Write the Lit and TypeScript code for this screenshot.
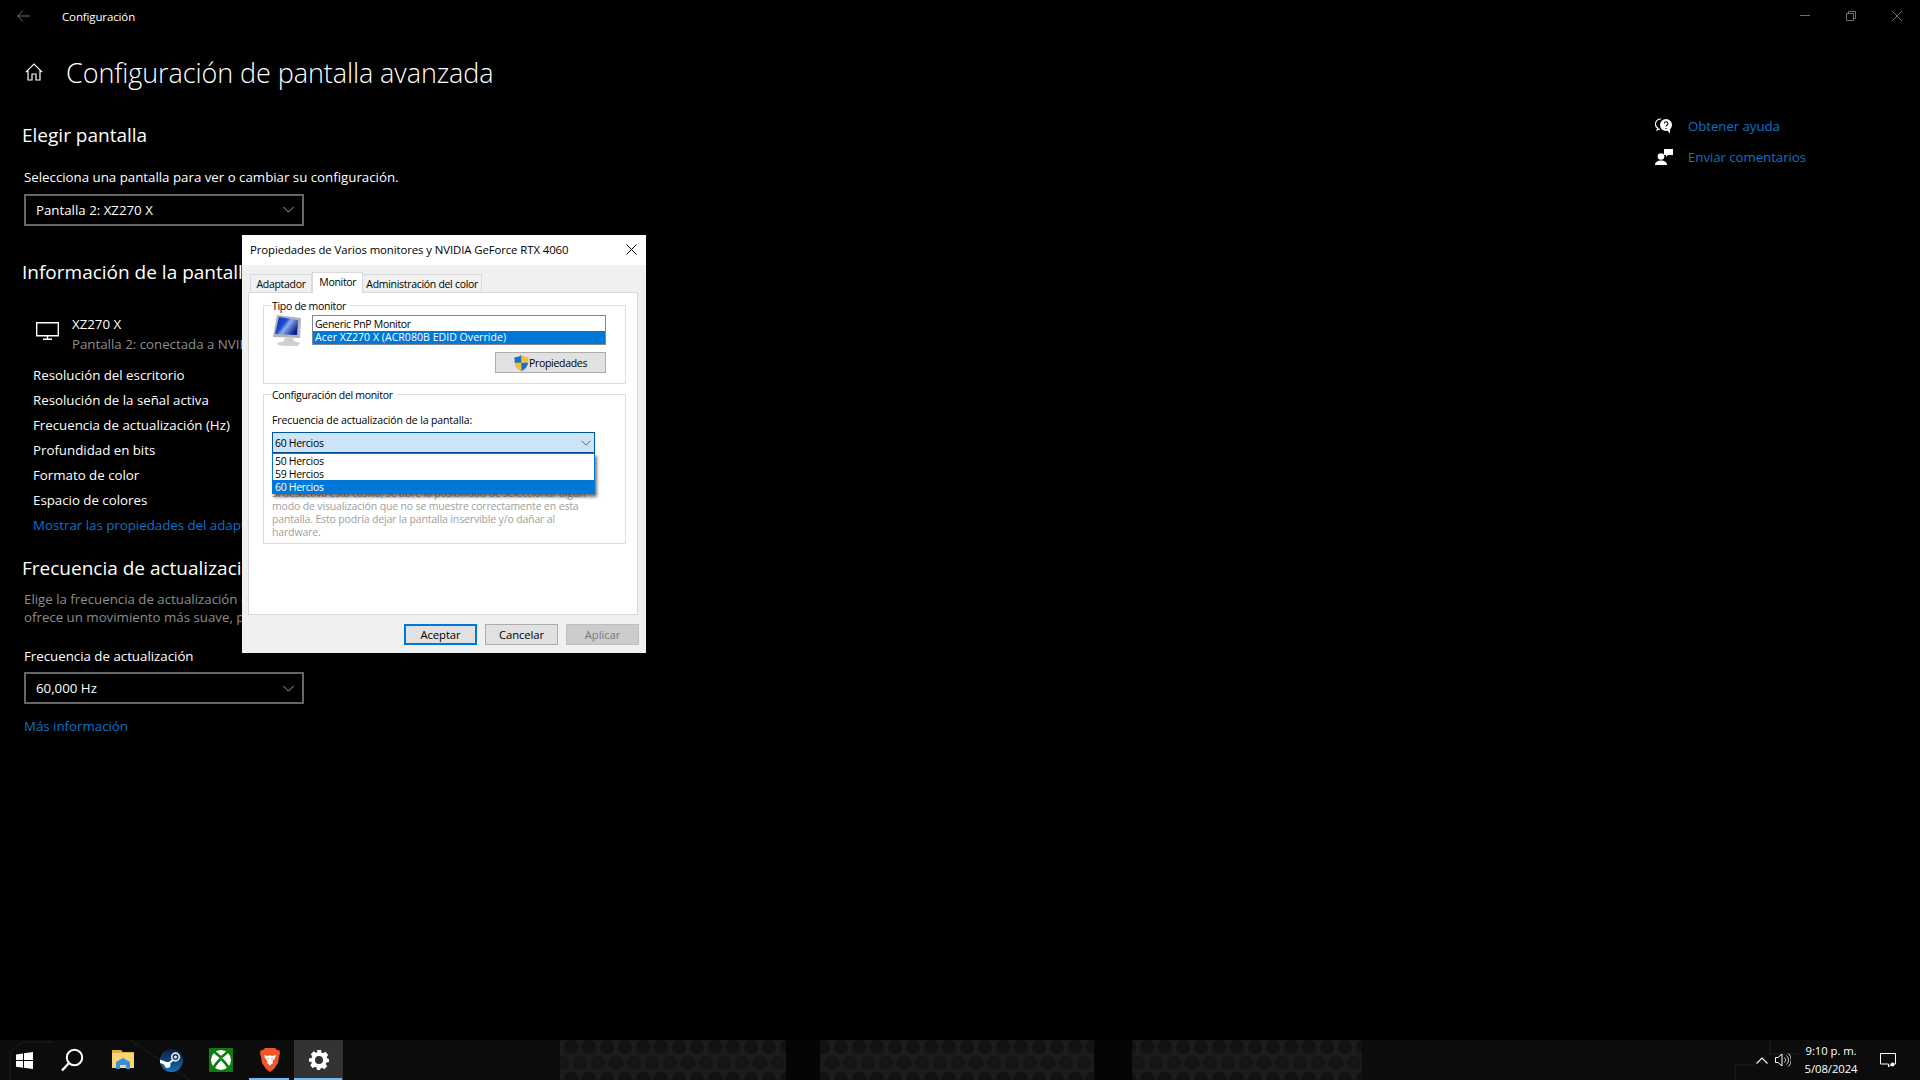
import { LitElement, css, html, svg } from 'lit';
import { customElement } from 'lit/decorators.js';

const chevron = html`<svg class="chev" viewBox="0 0 14 8"><path d="M1 1l6 6 6-6" fill="none" stroke="currentColor" stroke-width="1"/></svg>`;

const infoRows = [
    'Resolución del escritorio',
    'Resolución de la señal activa',
    'Frecuencia de actualización (Hz)',
    'Profundidad en bits',
    'Formato de color',
    'Espacio de colores',
];

const hzOptions = ['50 Hercios', '59 Hercios', '60 Hercios'];

const warningLines = [
    'Si desactiva esta casilla, se abre la posibilidad de seleccionar algún',
    'modo de visualización que no se muestre correctamente en esta',
    'pantalla. Esto podría dejar la pantalla inservible y/o dañar al',
    'hardware.',
];

// Mesh bands of the wallpaper that shows through the taskbar
const meshBands = [
    { x: 560, w: 226 },
    { x: 820, w: 274 },
    { x: 1132, w: 230 },
];

const taskIcons = [
    html`<svg width="17" height="17" viewBox="0 0 17 17"><path fill="#fff" d="M0 2.400l7-1v6.700H0zM8 1.300L17 0v8.100H8zM0 9h7v6.700l-7-1zM8 9h9v8l-9-1.300z"/></svg>`,
    html`<svg class="search" width="24" height="24" viewBox="0 0 24 24"><circle cx="14.500" cy="9.500" r="7.700" fill="none" stroke="#fff" stroke-width="2"/><path d="M9 15L2 22.500" stroke="#fff" stroke-width="2.400"/></svg>`,
    html`<svg width="22" height="20" viewBox="0 0 22 20"><path fill="#e0b040" d="M0 0h9l2 2h11v3H0z"/><path fill="#f7d675" d="M0 3h22v15H0z"/><path fill="#3b8fd8" d="M4 12l7-4 7 4v7h-4v-4H8v4H4z"/></svg>`,
    html`<svg width="23" height="23" viewBox="0 0 23 23"><defs><linearGradient id="steam" x1="0" y1="0" x2="0" y2="1"><stop offset="0" stop-color="#0f1f3f"/><stop offset="0.55" stop-color="#12487f"/><stop offset="1" stop-color="#1a6fae"/></linearGradient></defs><circle cx="11.500" cy="11.500" r="11.500" fill="url(#steam)"/><path fill="#fff" d="M0 10.500l9 3.500-1.500 3L0 14z"/><circle cx="7.500" cy="16" r="3" fill="#fff"/><path d="M8 15l5-4" stroke="#fff" stroke-width="2"/><circle cx="15.500" cy="8" r="3.800" fill="none" stroke="#e4e9ef" stroke-width="1.700"/><circle cx="15.500" cy="8" r="1.500" fill="#e4e9ef"/></svg>`,
    html`<svg width="24" height="24" viewBox="0 0 24 24"><rect width="24" height="24" rx="1" fill="#107c10"/><circle cx="12" cy="12" r="10" fill="#fff"/><path d="M12 9.500L5.200 3.800M12 9.500l6.800-5.700M12 10.500C8 14.500 5 18 4.300 20.800M12 10.500c4 4 7 7.500 7.700 10.300" fill="none" stroke="#107c10" stroke-width="2.600"/></svg>`,
    html`<svg width="20" height="24" viewBox="0 0 20 24"><path fill="#f1562b" d="M5 0h10l2 2 2.500.5L20 5l-1 4-1 6-4 6-4 3-4-3-4-6-1-6-1-4 .5-2.500L3 2z"/><path fill="#fff" d="M4 7l4 1 2-.7 2 .7 4-1-1 3-2.500 3 .5 2-3 2.500L7 15l.5-2L5 10z"/><path fill="#f1562b" d="M7 10l2 .5-1 1zM13 10l-2 .5 1 1z"/></svg>`,
    html`<svg width="20" height="20" viewBox="0 0 20 20"><path fill="#fff" fill-rule="evenodd" d="M8 0h4l.5 2.600 1.600.7 2.200-1.500 2.900 2.900-1.500 2.200.7 1.600L20 9v3l-2.600.5-.7 1.600 1.500 2.200-2.900 2.900-2.200-1.500-1.600.7L11 20H8l-.5-2.600-1.600-.7-2.200 1.500-2.400-2.900 1.500-2.200-.7-1.600L0 12V8.500l2.600-.5.7-1.600-1.500-2.200 2.900-2.900 2.200 1.500 1.600-.7zM10 6a4 4 0 1 0 0 8 4 4 0 0 0 0-8z"/></svg>`,
];

@customElement('app-root')
export class AppRoot extends LitElement {
    static styles = css`
        :host {
            display: flex;
            flex-direction: column;
            height: 1080px;
            background: #000;
            color: #fff;
            font-family: 'Open Sans', 'Noto Sans', sans-serif;
            overflow: hidden;
            position: relative;
        }

        /* SETTINGS WINDOW */
        .window { flex: 1; display: flex; flex-direction: column; }

        .titlebar {
            height: 32px;
            display: flex;
            align-items: center;
            font-size: 11.500px;
            letter-spacing: -0.130px;
            color: #fff;
        }
        .back { margin-left: 17px; width: 45px; color: #6e6e6e; display: flex; }
        .controls { margin-left: auto; display: flex; gap: 36px; padding-right: 18px; color: #707070; }
        .controls svg { display: block; }

        .content { flex: 1; display: flex; }
        .main { width: 1650px; padding-left: 24px; box-sizing: border-box; }

        .page-title { display: flex; align-items: center; height: 40px; margin: 20px 0 0 1px; }
        .page-title svg { margin-right: 23px; }
        .page-title h1 { font-size: 27px; font-weight: 300; margin: 0; letter-spacing: -0.085px; white-space: nowrap; }

        h2 { font-size: 19px; font-weight: 400; margin: 0 0 0 -2px; line-height: 28px; white-space: nowrap; }
        .t14 { font-size: 13.300px; line-height: 18px; letter-spacing: -0.010px; white-space: nowrap; }
        .muted { color: #8c8c8c; }
        .link { color: #0a72c8; }

        .choose { margin-top: 28.500px; }
        .choose .intro { margin-top: 19px; }

        .select {
            width: 280px;
            height: 32px;
            box-sizing: border-box;
            border: 2px solid #666;
            margin-top: 8px;
            padding: 0 10px;
            display: flex;
            align-items: center;
            justify-content: space-between;
        }
        .chev { width: 13px; height: 7px; color: #bbb; margin-right: -3px; }

        .info { margin-top: 32.500px; }
        .monitor { display: flex; margin: 28px 0 0 12px; }
        .monitor svg { margin: 8px 13px 0 0; }
        .monitor .t14 { line-height: 20px; }
        .rows { margin: 9px 0 0 9px; display: flex; flex-direction: column; }
        .rows .t14 { line-height: 25px; }

        .rate { margin-top: 16px; }
        .rate .desc { margin-top: 8px; }
        .rate .label { margin-top: 21px; }
        .rate .select { margin-top: 7px; }
        .rate .more { margin-top: 13px; }

        .aside { padding: 84.500px 0 0 5px; display: flex; flex-direction: column; gap: 13px; font-size: 13.300px; letter-spacing: -0.080px; white-space: nowrap; }
        .aside div { display: flex; align-items: center; height: 18px; gap: 15px; color: #0a72c8; }

        /* DIALOG */
        .dialog {
            position: absolute;
            left: 242px;
            top: 235px;
            width: 404px;
            height: 418px;
            background: #f0f0f0;
            color: #000;
            font-size: 10.500px;
            letter-spacing: -0.300px;
            box-sizing: border-box;
            display: flex;
            flex-direction: column;
            white-space: nowrap;
        }
        .dlg-title {
            height: 30px;
            background: #fff;
            display: flex;
            align-items: center;
            justify-content: space-between;
            padding: 0 9px 2px 8px;
            box-sizing: border-box;
            flex: none;
            font-size: 11.400px;
            letter-spacing: -0.100px;
        }
        .tabs { display: flex; align-items: flex-end; height: 27px; padding-left: 8px; flex: none; }
        .tab {
            height: 18px;
            box-sizing: border-box;
            background: #f0f0f0;
            border: 1px solid #d9d9d9;
            border-bottom: none;
            border-left: none;
            padding: 0 3px;
            display: flex;
            align-items: center;
        }
        .tab:first-child { border-left: 1px solid #d9d9d9; padding: 0 5.500px; }
        .tab.active {
            height: 21px;
            background: #fff;
            padding: 0 6px 3px;
            margin-bottom: -1px;
            border-left: 1px solid #d9d9d9;
            position: relative;
        }
        .panel {
            margin: 0 8px 0 6px;
            height: 323px;
            background: #fff;
            border: 1px solid #d9d9d9;
            box-sizing: border-box;
            padding: 12px 11px 0 14px;
        }
        .group {
            border: 1px solid #dcdcdc;
            position: relative;
            box-sizing: border-box;
        }
        .legend {
            position: absolute;
            top: -7px;
            left: 7px;
            background: #fff;
            padding: 0 4px 0 1px;
            line-height: 15px;
        }
        .g1 { height: 79px; padding: 9px 19px 0 9px; }
        .g2 { height: 150px; margin-top: 10px; padding: 18px 9px 0 8px; }

        .monitor-row { display: flex; justify-content: space-between; }
        .list {
            width: 294px;
            height: 30px;
            border: 1px solid #828790;
            box-sizing: border-box;
            padding-top: 2px;
        }
        .list div { height: 13px; line-height: 13px; padding-left: 2px; }
        .list .sel, .drop .sel { background: #0078d7; color: #fff; }
        .list .sel { letter-spacing: 0.050px; }

        .prop-row { display: flex; justify-content: flex-end; margin-top: 5px; }
        .btn {
            background: #e1e1e1;
            border: 1px solid #adadad;
            box-sizing: border-box;
            height: 21px;
            display: flex;
            align-items: center;
            justify-content: center;
        }
        .prop { width: 111px; gap: 0; }

        .rate-label { line-height: 15px; letter-spacing: -0.120px; }
        .combo {
            width: 323px;
            height: 21px;
            margin-top: 4px;
            background: #cce4f7;
            border: 1px solid #005499;
            box-sizing: border-box;
            display: flex;
            align-items: center;
            justify-content: space-between;
            padding: 0 4px 0 2px;
        }
        .combo .chev { width: 10px; height: 6px; color: #333; margin-right: -1px; }
        .warn { margin-top: 34px; color: #a0a0a0; line-height: 13px; letter-spacing: -0.150px; }

        .drop {
            position: absolute;
            left: 8px;
            top: 58px;
            width: 323px;
            height: 41px;
            background: #fff;
            border: 1px solid #0078d7;
            box-sizing: border-box;
            box-shadow: 2px 3px 3px rgba(0, 0, 0, 0.55);
        }
        .drop div { height: 13px; line-height: 15px; padding-left: 2px; }

        .footer { display: flex; gap: 8px; padding: 9px 7px 0 0; justify-content: flex-end; font-size: 11.300px; letter-spacing: -0.100px; }
        .footer .btn { width: 73px; }
        .footer .ok { border: 2px solid #0078d7; }
        .footer .off { background: #ccc; border-color: #bfbfbf; color: #7a7a7a; }

        /* TASKBAR */
        .taskbar {
            height: 40px;
            flex: none;
            background: #0c0c0c;
            display: flex;
            position: relative;
        }
        .wall { position: absolute; left: 0; top: 0; }
        .task {
            width: 49px;
            height: 40px;
            display: flex;
            align-items: center;
            justify-content: center;
            position: relative;
            box-sizing: border-box;
        }
        .task .search { margin-right: 3px; }
        .task.open::after {
            content: '';
            position: absolute;
            left: 4px;
            right: 5px;
            bottom: 0;
            height: 2px;
            background: #76b9ed;
        }
        .task.active { background: #333; }
        .task.active::after { left: 0; right: 1px; }

        .tray { margin-left: auto; display: flex; align-items: center; position: relative; }
        .tray svg { display: block; }
        .clock {
            width: 76px;
            margin: 0 11px 0 2px;
            text-align: center;
            font-size: 11.300px;
            line-height: 18px;
            letter-spacing: -0.050px;
            white-space: nowrap;
        }
        .tray .notif { margin-right: 24px; }
        .tray .chevron-up { margin-right: 7px; }
    `;

    renderWallpaper() {
        return svg`
            <svg class="wall" width="1920" height="40">
                <defs>
                    <pattern id="mesh" width="18" height="32" patternUnits="userSpaceOnUse" x="4" y="-1">
                        <rect width="18" height="32" fill="#1c1c1c"/>
                        <ellipse cx="9" cy="8" rx="7.500" ry="7.200" fill="#121212"/>
                        <ellipse cx="0" cy="24" rx="7.500" ry="7.200" fill="#151515"/>
                        <ellipse cx="18" cy="24" rx="7.500" ry="7.200" fill="#151515"/>
                    </pattern>
                </defs>
                ${meshBands.map(b => svg`<rect x=${b.x} width=${b.w} height="40" fill="url(#mesh)"/>`)}
                <rect x="786" width="34" height="40" fill="#050505"/>
                <rect x="1094" width="38" height="40" fill="#050505"/>
                <path d="M10 40V12l12-10h30M130 0l60 40M1735 40V25h20M1770 0v14h30" fill="none" stroke="#151515" stroke-width="2"/>
            </svg>
        `;
    }

    renderDialog() {
        return html`
            <div class="dialog">
                <div class="dlg-title">
                    <span>Propiedades de Varios monitores y NVIDIA GeForce RTX 4060</span>
                    <svg width="11" height="11" viewBox="0 0 11 11"><path d="M.5.5l10 10M10.500.5l-10 10" stroke="#000" stroke-width="1"/></svg>
                </div>
                <div class="tabs">
                    <div class="tab">Adaptador</div>
                    <div class="tab active">Monitor</div>
                    <div class="tab">Administración del color</div>
                </div>
                <div class="panel">
                    <div class="group g1">
                        <span class="legend">Tipo de monitor</span>
                        <div class="monitor-row">
                            <svg width="30" height="32" viewBox="0 0 30 32">
                                <defs>
                                    <linearGradient id="scr" x1="0" y1="0" x2="1" y2="0.600">
                                        <stop offset="0" stop-color="#0a2bc0"/>
                                        <stop offset="0.45" stop-color="#1f4fd0"/>
                                        <stop offset="0.6" stop-color="#8fb0f0"/>
                                        <stop offset="1" stop-color="#0a1f8c"/>
                                    </linearGradient>
                                </defs>
                                <path fill="#aeb4bf" d="M4 0l24 3-1 20-27-1z"/>
                                <path fill="url(#scr)" d="M6 2l19 3-1 15-22-1z"/>
                                <path fill="#cfcfcf" d="M12 23h8l1 3 6 2-2 3H12l-7-1-1-2 7-2z"/>
                            </svg>
                            <div class="list">
                                <div>Generic PnP Monitor</div>
                                <div class="sel">Acer XZ270 X (ACR080B EDID Override)</div>
                            </div>
                        </div>
                        <div class="prop-row">
                            <div class="btn prop">
                                <svg width="15" height="16" viewBox="0 0 15 16">
                                    <path fill="#1f6fc4" d="M7.500 0C5.500 1.500 3 2.200 .5 2.300c0 5-.3 10 7 13.700z"/>
                                    <path fill="#f6c02d" d="M7.500 0c2 1.500 4.500 2.200 7 2.300 0 2 0 3.800-.4 5.400H7.500z"/>
                                    <path fill="#f6c02d" d="M.9 7.700h6.600V16C3 13.800 1.500 10.800.9 7.700z"/>
                                    <path fill="#1f6fc4" d="M7.500 7.700h6.600C13.500 10.800 12 13.800 7.500 16z"/>
                                </svg>
                                <span>Propiedades</span>
                            </div>
                        </div>
                    </div>
                    <div class="group g2">
                        <span class="legend">Configuración del monitor</span>
                        <div class="rate-label">Frecuencia de actualización de la pantalla:</div>
                        <div class="combo"><span>60 Hercios</span>${chevron}</div>
                        <div class="warn">${warningLines.map(l => html`<div>${l}</div>`)}</div>
                        <div class="drop">
                            ${hzOptions.map(o => html`<div class=${o === '60 Hercios' ? 'sel' : ''}>${o}</div>`)}
                        </div>
                    </div>
                </div>
                <div class="footer">
                    <div class="btn ok">Aceptar</div>
                    <div class="btn">Cancelar</div>
                    <div class="btn off">Aplicar</div>
                </div>
            </div>
        `;
    }

    render() {
        return html`
            <div class="window">
                <div class="titlebar">
                    <span class="back"><svg width="13" height="12" viewBox="0 0 13 12"><path d="M6 .5L.8 6 6 11.500M1 6h12" fill="none" stroke="currentColor" stroke-width="1"/></svg></span>
                    <span>Configuración</span>
                    <div class="controls">
                        <svg width="10" height="10" viewBox="0 0 10 10"><path d="M0 4.500h10" stroke="currentColor"/></svg>
                        <svg width="10" height="10" viewBox="0 0 10 10"><path d="M.5 2.500h7v7h-7zM2.500 2.500V.5h7v7h-2" fill="none" stroke="currentColor"/></svg>
                        <svg width="10" height="10" viewBox="0 0 10 10"><path d="M0 0l10 10M10 0L0 10" stroke="currentColor"/></svg>
                    </div>
                </div>
                <div class="content">
                    <div class="main">
                        <div class="page-title">
                            <svg width="18" height="18" viewBox="0 0 18 18"><path d="M.8 9.200L9 1l8.200 8.200M3 7v10h4v-6h4v6h4V7" fill="none" stroke="#fff" stroke-width="1.200"/></svg>
                            <h1>Configuración de pantalla avanzada</h1>
                        </div>

                        <div class="choose">
                            <h2>Elegir pantalla</h2>
                            <div class="t14 intro">Selecciona una pantalla para ver o cambiar su configuración.</div>
                            <div class="select t14"><span>Pantalla 2: XZ270 X</span>${chevron}</div>
                        </div>

                        <div class="info">
                            <h2>Información de la pantalla</h2>
                            <div class="monitor">
                                <svg width="23" height="18" viewBox="0 0 23 18"><path d="M.7.7h21.600v13H.7zM11.500 14v3M7 17.200h9" fill="none" stroke="#fff" stroke-width="1.400"/></svg>
                                <div>
                                    <div class="t14">XZ270 X</div>
                                    <div class="t14 muted">Pantalla 2: conectada a NVIDIA GeForce RTX 4060</div>
                                </div>
                            </div>
                            <div class="rows">
                                ${infoRows.map(r => html`<div class="t14">${r}</div>`)}
                                <div class="t14 link">Mostrar las propiedades del adaptador de pantalla para Pantalla 2</div>
                            </div>
                        </div>

                        <div class="rate">
                            <h2>Frecuencia de actualización</h2>
                            <div class="t14 muted desc">Elige la frecuencia de actualización de la pantalla. Una frecuencia</div>
                            <div class="t14 muted">ofrece un movimiento más suave, pero también consume más</div>
                            <div class="t14 label">Frecuencia de actualización</div>
                            <div class="select t14"><span>60,000 Hz</span>${chevron}</div>
                            <div class="t14 link more">Más información</div>
                        </div>
                    </div>

                    <div class="aside">
                        <div>
                            <svg width="18" height="16" viewBox="0 0 18 16"><path d="M6 1a5.500 5 0 0 0-3 9.200L2 12l3-1" fill="none" stroke="#fff" stroke-width="1.200"/><circle cx="11" cy="7" r="6" fill="#fff"/><path d="M12 12l3 3.500v-5z" fill="#fff"/><path d="M9.300 5.500a1.800 1.800 0 1 1 2.500 1.700c-.6.300-.8.600-.8 1.300M11 10v1" fill="none" stroke="#000" stroke-width="1.100"/></svg>
                            <span>Obtener ayuda</span>
                        </div>
                        <div>
                            <svg width="18" height="16" viewBox="0 0 18 16"><circle cx="6" cy="7.500" r="3.300" fill="#fff"/><path d="M0 16c0-3 2.500-4.500 6-4.500s6 1.500 6 4.500z" fill="#fff"/><path d="M9 0h9v6h-5l-2 2V6H9z" fill="#fff"/></svg>
                            <span>Enviar comentarios</span>
                        </div>
                    </div>
                </div>
            </div>

            ${this.renderDialog()}

            <div class="taskbar">
                ${this.renderWallpaper()}
                ${taskIcons.map((icon, i) => html`<div class="task ${i >= 5 ? 'open' : ''} ${i == 6 ? 'active' : ''}">${icon}</div>`)}
                <div class="tray">
                    <svg class="chevron-up" width="12" height="7" viewBox="0 0 12 7"><path d="M.5 6.500L6 1l5.500 5.500" fill="none" stroke="#fff" stroke-width="1.100"/></svg>
                    <svg width="16" height="14" viewBox="0 0 16 14"><path d="M.5 4.500h2.500L7 1v12L3 9.500H.5z" fill="none" stroke="#fff"/><path d="M9.500 4.500a3.500 3.500 0 0 1 0 5M11.500 2.500a6 6 0 0 1 0 9M13.500.5a9 9 0 0 1 0 13" fill="none" stroke="#fff" stroke-width="0.800"/></svg>
                    <div class="clock"><div>9:10 p. m.</div><div>5/08/2024</div></div>
                    <svg class="notif" width="16" height="15" viewBox="0 0 16 15"><path d="M.5.5h15v10.500h-4l-3 3v-3H.5z" fill="none" stroke="#fff"/><circle cx="12.500" cy="11.500" r="2" fill="#fff"/></svg>
                </div>
            </div>
        `;
    }
}
